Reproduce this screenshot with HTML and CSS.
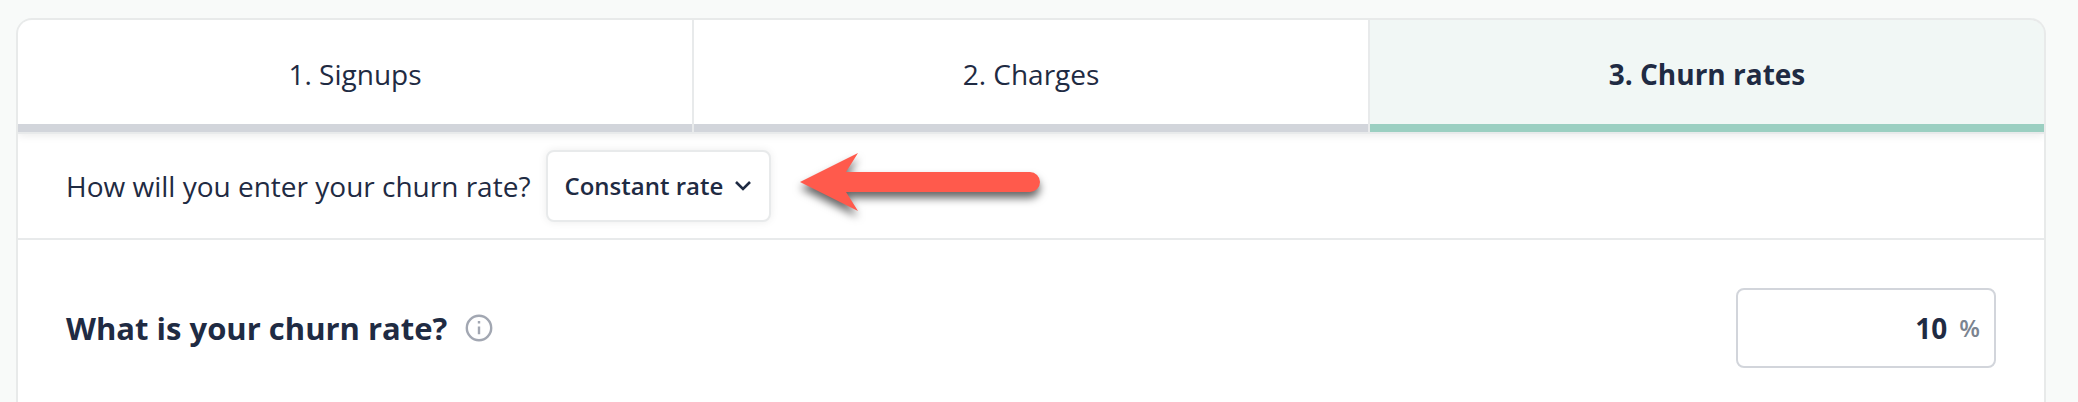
FILE: index.html
```html
<!DOCTYPE html>
<html lang="en">
<head>
  <meta charset="UTF-8">
  <meta name="viewport" content="width=device-width, initial-scale=1.0">
  <title>Churn rates</title>
  <link rel="stylesheet" href="styles.css">
</head>
<body>
  <main class="card">
    <nav class="tabs">
      <a class="tab" href="#signups">1. Signups</a>
      <a class="tab" href="#charges">2. Charges</a>
      <a class="tab active" href="#churn" aria-current="page">3. Churn rates</a>
    </nav>

    <div class="row method">
      <label class="method-label" for="rateType">How will you enter your churn rate?</label>
      <div class="select-wrap">
        <select id="rateType">
          <option value="constant">Constant rate</option>
        </select>
        <svg class="chevron" viewBox="0 0 16 16" aria-hidden="true">
          <path d="M1 4l7 7 7-7" fill="none" stroke="#1f2b43" stroke-width="2.6"/>
        </svg>
      </div>
      <svg class="arrow" viewBox="0 0 256 72" aria-hidden="true">
        <path d="M13 32L71 3L59 22H243a10 10 0 0 1 0 20H59L71 61Z" fill="#ff5a4c"/>
      </svg>
    </div>

    <div class="row rate">
      <label class="rate-label" for="churnRate">What is your churn rate?</label>
      <button class="info" type="button" aria-label="More information">
        <svg viewBox="0 0 28 28" aria-hidden="true">
          <circle cx="14" cy="14" r="12.2" fill="none" stroke="#a2a7b2" stroke-width="2.4"/>
          <path d="M14 7v2.6M14 12.6v7.6" fill="none" stroke="#a2a7b2" stroke-width="2.4"/>
        </svg>
      </button>
      <div class="field">
        <input type="text" id="churnRate" inputmode="decimal" value="10">
        <span class="unit">%</span>
      </div>
    </div>
  </main>
</body>
</html>
```
FILE: styles.css
```css
* {
  box-sizing: border-box;
}
body {
  margin: 0;
  padding: 18px 32px 0 16px;
  background-color: #f8faf9;
  color: #1f2b43;
  font-family: "Open Sans", sans-serif;
  font-size: 28px;
  line-height: 36px;
}
.card {
  background-color: #fff;
  border: 2px solid #e8eaea;
  border-bottom: none;
  border-radius: 16px 16px 0 0;
  overflow: hidden;
}
.tabs {
  display: grid;
  grid-template-columns: repeat(3, 1fr);
  gap: 2px;
  background-color: #e8eaeb;
  border-bottom: 2px solid #e8eaeb;
  box-shadow: 0 2px 8px rgba(0, 0, 0, 0.08);
}
.tab {
  padding: 36px 16px 32px;
  background-color: #fff;
  border-bottom: 8px solid #d2d5db;
  color: inherit;
  text-align: center;
  text-decoration: none;
}
.tab.active {
  background-color: #f1f7f5;
  border-bottom-color: #9bcfc1;
  font-weight: bold;
}
.row {
  display: flex;
  align-items: center;
  padding: 16px 48px;
}
.method {
  gap: 16px;
  border-bottom: 2px solid #e8eaeb;
}
.select-wrap {
  position: relative;
}
select {
  appearance: none;
  display: block;
  height: 72px;
  padding: 0 46px 0 16px;
  background-color: #fff;
  border: 2px solid #e8eaeb;
  border-radius: 8px;
  box-shadow: 0 0 8px rgba(0, 0, 0, 0.08);
  color: inherit;
  font: inherit;
  font-size: 24px;
  font-weight: 600;
}
.chevron {
  position: absolute;
  top: 28px;
  right: 20px;
  width: 16px;
  height: 16px;
  pointer-events: none;
}
.arrow {
  width: 256px;
  height: 72px;
  overflow: visible;
  filter: drop-shadow(0 6px 4px rgba(0, 0, 0, 0.6));
}
.rate {
  gap: 18px;
  padding: 48px;
}
.rate-label {
  font-size: 31px;
  font-weight: bold;
}
.info {
  display: flex;
  padding: 0;
  background: none;
  border: none;
  cursor: pointer;
}
.info svg {
  width: 28px;
  height: 28px;
}
.field {
  display: flex;
  align-items: center;
  gap: 12px;
  width: 260px;
  height: 80px;
  margin-left: auto;
  padding: 0 14px;
  border: 2px solid #d2d5db;
  border-radius: 8px;
}
.field input {
  flex: 1;
  min-width: 0;
  padding: 0;
  background: none;
  border: none;
  outline: none;
  color: inherit;
  font: inherit;
  font-weight: bold;
  text-align: right;
}
.unit {
  color: #7b8490;
  font-size: 24px;
  font-weight: 600;
}
```
